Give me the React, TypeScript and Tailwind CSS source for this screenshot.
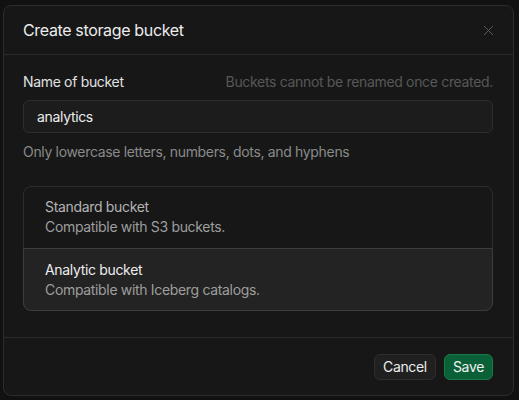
import { X } from 'lucide-react'

const options = [
  { id: 'standard', title: 'Standard bucket', desc: 'Compatible with S3 buckets.' },
  { id: 'analytic', title: 'Analytic bucket', desc: 'Compatible with Iceberg catalogs.' },
]

export default function App() {
  const selected = 'analytic'

  return (
    <div className="w-[519px] h-[400px] bg-[#111111] pt-[5px] pl-[3px] font-['Inter',sans-serif] tracking-[-0.33px]">
      <div className="w-[511px] h-[391px] flex flex-col rounded-[8px] border border-[#2c2c2c] bg-[#171717]">
        {/* Header */}
        <div className="h-[49px] flex items-center justify-between pl-[19px] pr-4 border-b border-[#2a2a2a]">
          <h2 className="text-[16px] text-[#ededed] tracking-[-0.35px]">Create storage bucket</h2>
          <button className="text-[#5c5c5c]">
            <X size={17} strokeWidth={1.4} />
          </button>
        </div>

        {/* Body */}
        <div className="flex-1 pl-[19px] pr-5 pt-[17px]">
          <div className="flex items-center justify-between text-[14px] leading-5">
            <span className="text-[#e2e2e2]">Name of bucket</span>
            <span className="text-[#575757]">Buckets cannot be renamed once created.</span>
          </div>
          <div className="mt-[8px] h-[33px] flex items-center pl-[13px] rounded-[6px] border border-[#2e2e2e] bg-[#1c1c1c] text-[14px] text-[#ededed]">
            analytics
          </div>
          <p className="mt-[9px] text-[14px] leading-5 text-[#8a8a8a]">Only lowercase letters, numbers, dots, and hyphens</p>

          <div className="mt-6 rounded-[8px] border border-[#2c2c2c]">
            {options.map((o) =>
              o.id === selected ? (
                <div
                  key={o.id}
                  className="-mx-px -mb-px h-[63px] flex flex-col justify-center pl-[21px] rounded-b-[8px] border border-[#3c3c3c] bg-[#232323] text-[14px] leading-5"
                >
                  <span className="text-[#ededed]">{o.title}</span>
                  <span className="text-[#9e9e9e]">{o.desc}</span>
                </div>
              ) : (
                <div key={o.id} className="h-[61px] flex flex-col justify-center pl-[21px] pb-[2px] text-[14px] leading-5">
                  <span className="text-[#b4b4b4]">{o.title}</span>
                  <span className="text-[#9e9e9e]">{o.desc}</span>
                </div>
              )
            )}
          </div>
        </div>

        {/* Footer */}
        <div className="h-[58px] flex items-center justify-end gap-2 px-5 border-t border-[#2a2a2a]">
          <button className="h-[26px] px-[8px] rounded-[6px] border border-[#2e2e2e] bg-[#202020] text-[14px] text-[#ededed]">
            Cancel
          </button>
          <button className="h-[26px] px-[8px] rounded-[6px] border border-[#1b7a48] bg-[#0a6037] text-[14px] text-[#f2f2f2]">
            Save
          </button>
        </div>
      </div>
    </div>
  )
}
